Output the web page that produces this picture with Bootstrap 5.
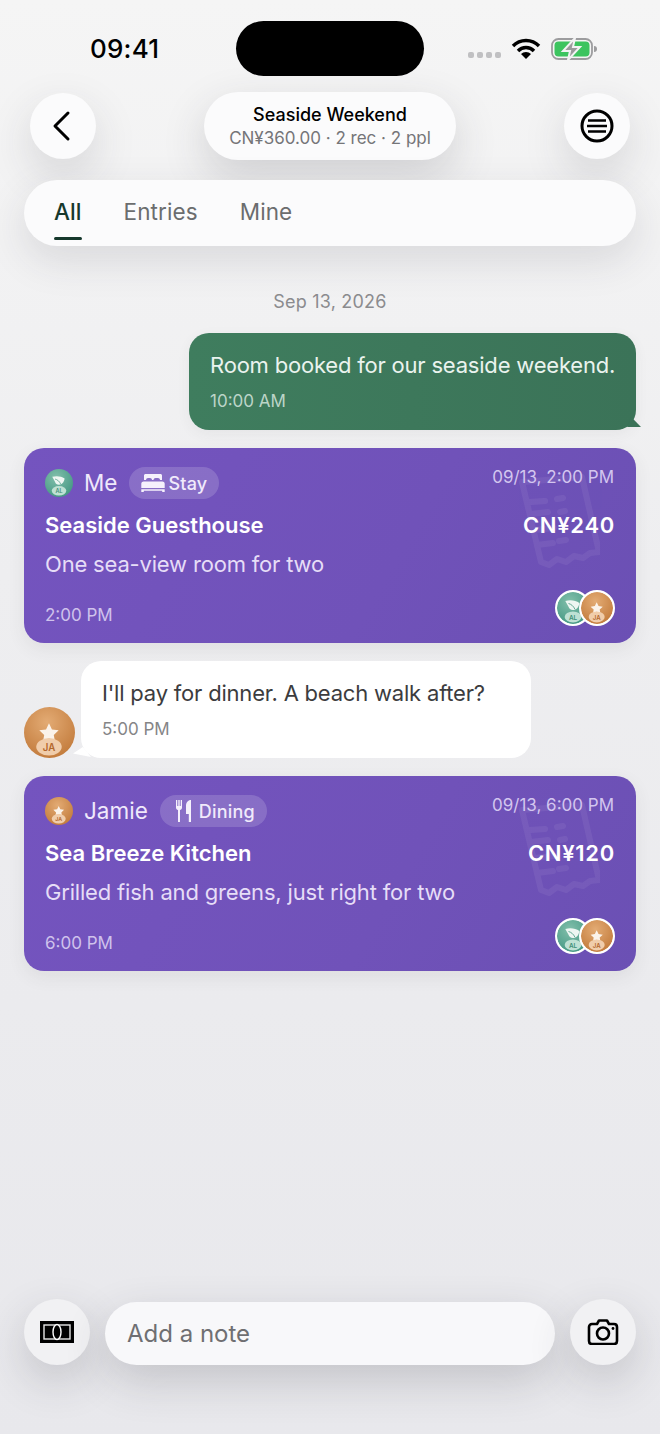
<!DOCTYPE html>
<html lang="en">
<head>
  <meta charset="UTF-8">
  <meta name="viewport" content="width=device-width, initial-scale=1">
  <title>Seaside Weekend</title>
  <link href="https://cdn.jsdelivr.net/npm/bootstrap@5.3.0/dist/css/bootstrap.min.css" rel="stylesheet">
  <style>
    html, body { height: 100%; }
    body {
      font-family: Inter, "Liberation Sans", sans-serif;
      background: linear-gradient(180deg, #f5f5f5 0%, #eeeef0 40%, #e8e8ec 100%);
      color: #3c3c3e;
      overflow: hidden;
    }
    .phone { width: 660px; height: 1434px; }

    /* status bar */
    .status-row { height: 92px; padding: 21px 62px 0 90px; }
    .clock { width: 146px; font-size: 26px; font-weight: 500; color: #000; line-height: 55px; letter-spacing: .2px; }
    .island { width: 188px; height: 55px; border-radius: 28px; background: #000; }
    .status-icons { margin-left: auto; height: 55px; gap: 10px; }
    .dots { gap: 3px; margin-top: 13px; }
    .dots i { width: 6px; height: 6px; border-radius: 2px; background: #c0c0c2; display: block; }

    /* header */
    .top-row { padding: 0 30px; height: 68px; }
    .round-btn {
      width: 66px; height: 66px; border-radius: 50%; background: #fbfbfc;
      box-shadow: 0 16px 44px rgba(50, 50, 60, .15);
    }
    .back-icon { margin-right: 5px; }
    .title-pill {
      width: 252px; height: 68px; border-radius: 34px; background: #fbfbfc;
      box-shadow: 0 16px 44px rgba(50, 50, 60, .18);
    }
    .title-main { font-size: 18px; font-weight: 500; color: #000; line-height: 24px; padding-top: 1px; }
    .title-sub { font-size: 17px; color: #757578; line-height: 23px; }

    /* tabs */
    .tab-bar {
      margin: 20px 24px 0; height: 66px; border-radius: 33px; background: #fbfbfc; padding: 0 30px;
      gap: 42px; box-shadow: 0 14px 40px rgba(50, 50, 60, .13);
    }
    .tab-item { font-size: 22.500px; color: #6b6d6e; line-height: 64px; height: 66px; position: relative; letter-spacing: .1px; }
    .tab-item.is-on { color: #16382c; font-weight: 500; }
    .tab-item.is-on::after {
      content: ""; position: absolute; left: 0; right: 0; bottom: 6px; height: 3px;
      border-radius: 2px; background: #16382c;
    }

    .date-line { font-size: 18px; color: #8b8b8e; line-height: 24px; margin-top: 44px; margin-bottom: 19px; text-align: center; letter-spacing: .2px; }

    /* chat bubbles */
    .feed { padding: 0 24px; gap: 18px; }
    .bubble { border-radius: 20px; position: relative; padding: 18px 21px 15px; }
    .bubble-text { font-size: 22px; line-height: 28px; letter-spacing: -.2px; white-space: nowrap; }
    .bubble-time { font-size: 17px; line-height: 24px; margin-top: 10px; }
    .bubble-me {
      align-self: flex-end; width: 447px; height: 97px; color: #eaf3ee;
      background: linear-gradient(90deg, #3f7d5e, #3b7358);
      box-shadow: 0 4px 14px rgba(60, 60, 70, .06);
    }
    .bubble-me .bubble-time { color: #bcd5c8; }
    .bubble-me::after {
      content: ""; position: absolute; right: -5px; bottom: 3px; width: 14px; height: 10px;
      background: #3b7358; clip-path: polygon(100% 100%, 30% 0, 0 100%);
    }
    .bubble-them { width: 450px; height: 97px; background: #fff; color: #3c3c3e; }
    .bubble-them .bubble-time { color: #858587; }
    .bubble-them::after {
      content: ""; position: absolute; left: -8px; bottom: 1px; width: 18px; height: 10px;
      background: #fff; clip-path: polygon(0 65%, 55% 0, 100% 100%);
    }
    .them-row { gap: 6px; }
    .them-avatar { width: 51px; height: 51px; flex: none; }

    /* expense cards */
    .entry {
      height: 195px; border-radius: 20px; padding: 19px 22px 0 21px; position: relative; overflow: hidden; color: #fff;
      background: linear-gradient(120deg, #7454bf 0%, #7052b9 60%, #6b50b4 100%);
      box-shadow: 0 6px 18px rgba(60, 60, 70, .08);
    }
    .entry-head { height: 32px; position: relative; }
    .entry-avatar { width: 28px; height: 28px; flex: none; }
    .entry-name { font-size: 22.500px; color: #efe8fb; margin-left: 11px; margin-right: 12px; }
    .kind-pill {
      height: 32px; border-radius: 16px; background: rgba(255, 255, 255, .16); padding: 0 12px 0 10px;
      font-size: 18px; font-weight: 500; color: #f0eafb; gap: 1px; letter-spacing: .2px;
    }
    .kind-glyph { width: 28px; }
    .entry-date { font-size: 17px; color: #d3c6ef; margin-left: auto; margin-top: -11px; }
    .entry-title { font-size: 22px; font-weight: 600; line-height: 28px; margin-top: 12px; position: relative; }
    .entry-price { letter-spacing: .7px; margin-right: -1px; }
    .entry-desc { font-size: 22px; color: #e6ddf7; line-height: 28px; margin-top: 11px; letter-spacing: -.18px; position: relative; }
    .entry-foot { margin-top: 12px; height: 36px; position: relative; }
    .entry-time { font-size: 17px; color: #cfc2ec; margin-top: 13px; }
    .avatar-stack { margin-right: -1px; }
    .stack-avatar { width: 36px; height: 36px; border-radius: 50%; border: 2px solid #fff; background: #fff; display: block; }
    .stack-avatar + .stack-avatar { margin-left: -12px; }
    .watermark { position: absolute; left: 486px; top: 22px; width: 90px; height: 100px; color: #fff; opacity: .06; }

    /* bottom bar */
    .bottom-row { padding: 0 24px; margin-bottom: 69px; gap: 15px; }
    .soft-btn {
      width: 66px; height: 66px; border-radius: 50%; background: #f1f1f3; flex: none;
      box-shadow: 0 16px 44px rgba(50, 50, 60, .2);
    }
    .note-box {
      height: 63px; border-radius: 32px; background: #f8f8fa; margin-top: 3px; padding: 0 22px;
      font-size: 24px; color: #6f6f72; box-shadow: 0 16px 44px rgba(50, 50, 60, .2);
    }
  </style>
</head>
<body>

<!-- shared avatars -->
<svg width="0" height="0" class="position-absolute">
  <defs>
    <radialGradient id="gradGreen" cx=".4" cy=".3" r=".8">
      <stop offset="0" stop-color="#82bfab"/><stop offset="1" stop-color="#3f9580"/>
    </radialGradient>
    <radialGradient id="gradOrange" cx=".45" cy=".3" r=".8">
      <stop offset="0" stop-color="#e3ab74"/><stop offset="1" stop-color="#bf7636"/>
    </radialGradient>
    <symbol id="avatarAl" viewBox="0 0 50 50">
      <circle cx="25" cy="25" r="25" fill="url(#gradGreen)"/>
      <path d="M13 14c8-2 16-1 22 3-1 7-5 11-10 11-4 0-6-2-7-5l-5-9z" fill="#eef6f2"/>
      <path d="M18 18c4 1 8 4 10 9" stroke="#5fa792" stroke-width="1.500" fill="none"/>
      <ellipse cx="25" cy="39" rx="13" ry="8.500" fill="#bfe1d4"/>
      <text x="25" y="43" text-anchor="middle" font-family="Inter, sans-serif" font-size="10" font-weight="600" fill="#3f8f78">AL</text>
    </symbol>
    <symbol id="avatarJa" viewBox="0 0 50 50">
      <circle cx="25" cy="25" r="25" fill="url(#gradOrange)"/>
      <path d="M24.500 16l2.900 6 6.600.9-4.800 4.600 1.200 6.500-5.900-3.200-5.900 3.200 1.200-6.500-4.800-4.600 6.600-.9z" fill="#fbf3ea"/>
      <ellipse cx="24.500" cy="39" rx="12.500" ry="8.500" fill="#f0cdab"/>
      <text x="24.500" y="43" text-anchor="middle" font-family="Inter, sans-serif" font-size="9.500" font-weight="600" fill="#b3672b">JA</text>
    </symbol>
    <symbol id="receiptMark" viewBox="0 0 90 100">
      <g fill="none" stroke="currentColor" stroke-width="6" stroke-linecap="round" stroke-linejoin="round">
        <path d="M12 12L72 7l17 75-9 1-7 5-9-2-8 6-9-3-8 6-8-3z"/>
        <path d="M20 32l15-1M47 29l6-1M21 44l17-2M50 42l5-1M24 60l20-2M27 75l16-2M49 71l7-1"/>
      </g>
    </symbol>
  </defs>
</svg>

<div class="phone d-flex flex-column">

  <!-- Status bar -->
  <div class="status-row d-flex align-items-start">
    <div class="clock">09:41</div>
    <div class="island"></div>
    <div class="status-icons d-flex align-items-center">
      <div class="dots d-flex"><i></i><i></i><i></i><i></i></div>
      <svg width="30" height="22" viewBox="0 0 30 22">
        <path d="M2 8a18 18 0 0 1 26 0" fill="none" stroke="#000" stroke-width="3.400"/>
        <path d="M7 13a11 11 0 0 1 16 0" fill="none" stroke="#000" stroke-width="3.400"/>
        <path d="M15 21l-5-5a7 7 0 0 1 10 0z" fill="#000"/>
      </svg>
      <svg width="47" height="22" viewBox="0 0 47 22">
        <rect x="1" y="1" width="40" height="20" rx="6.500" fill="none" stroke="#9c9c9e" stroke-width="1.800"/>
        <rect x="3.500" y="3.500" width="35" height="15" rx="4" fill="#3cc45f"/>
        <path d="M43 8c2 0 3 1 3 3s-1 3-3 3z" fill="#9c9c9e"/>
        <path d="M24 0L12 13h7l-2 9 12-13h-7z" fill="#9a9a9c" stroke="#f2f2f3" stroke-width="2"/>
      </svg>
    </div>
  </div>

  <!-- Header -->
  <div class="top-row d-flex justify-content-between align-items-center">
    <div class="round-btn d-flex align-items-center justify-content-center">
      <svg class="back-icon" width="20" height="32" viewBox="0 0 20 32"><path d="M17 3L4 16l13 13" fill="none" stroke="#000" stroke-width="3" stroke-linecap="round" stroke-linejoin="round"/></svg>
    </div>
    <div class="title-pill text-center d-flex flex-column justify-content-center">
      <div class="title-main">Seaside Weekend</div>
      <div class="title-sub">CN¥360.00 · 2 rec · 2 ppl</div>
    </div>
    <div class="round-btn d-flex align-items-center justify-content-center">
      <svg width="34" height="34" viewBox="0 0 34 34">
        <circle cx="17" cy="17" r="15" fill="none" stroke="#000" stroke-width="3"/>
        <path d="M8 11.500h18M7 17h20M8 22.500h18" stroke="#000" stroke-width="2.400"/>
      </svg>
    </div>
  </div>

  <!-- Tabs -->
  <div class="tab-bar d-flex">
    <div class="tab-item is-on">All</div>
    <div class="tab-item">Entries</div>
    <div class="tab-item">Mine</div>
  </div>

  <div class="date-line">Sep 13, 2026</div>

  <!-- Feed -->
  <div class="feed d-flex flex-column">
    <div class="bubble bubble-me">
      <div class="bubble-text">Room booked for our seaside weekend.</div>
      <div class="bubble-time">10:00 AM</div>
    </div>

    <div class="entry">
      <svg class="watermark"><use href="#receiptMark"/></svg>
      <div class="entry-head d-flex align-items-center">
        <svg class="entry-avatar"><use href="#avatarAl"/></svg>
        <span class="entry-name">Me</span>
        <span class="kind-pill d-flex align-items-center">
          <span class="kind-glyph d-flex justify-content-center">
            <svg width="24" height="18" viewBox="0 0 24 18" fill="#f5f1fc">
              <path d="M3 1.500C3 .7 3.700 0 4.500 0h15c.8 0 1.500.7 1.500 1.500V6h-2c0-1.200-1-2-2-2h-2.500c-1 0-2 .8-2 2h-1.500c0-1.200-1-2-2-2H7c-1 0-2 .8-2 2H3z"/>
              <path d="M2.500 7.500h19c1.200 0 2.200 1 2.200 2.200V14H.3V9.700c0-1.200 1-2.200 2.200-2.200zM.3 15.300h23.400V18h-2.500v-1.200H2.800V18H.3z"/>
            </svg>
          </span>
          Stay
        </span>
        <span class="entry-date">09/13, 2:00 PM</span>
      </div>
      <div class="d-flex justify-content-between entry-title"><span>Seaside Guesthouse</span><span class="entry-price">CN¥240</span></div>
      <div class="entry-desc">One sea-view room for two</div>
      <div class="entry-foot d-flex justify-content-between">
        <span class="entry-time">2:00 PM</span>
        <span class="avatar-stack d-flex">
          <svg class="stack-avatar"><use href="#avatarAl"/></svg>
          <svg class="stack-avatar"><use href="#avatarJa"/></svg>
        </span>
      </div>
    </div>

    <div class="them-row d-flex align-items-end">
      <svg class="them-avatar"><use href="#avatarJa"/></svg>
      <div class="bubble bubble-them">
        <div class="bubble-text">I'll pay for dinner. A beach walk after?</div>
        <div class="bubble-time">5:00 PM</div>
      </div>
    </div>

    <div class="entry">
      <svg class="watermark"><use href="#receiptMark"/></svg>
      <div class="entry-head d-flex align-items-center">
        <svg class="entry-avatar"><use href="#avatarJa"/></svg>
        <span class="entry-name">Jamie</span>
        <span class="kind-pill d-flex align-items-center">
          <span class="kind-glyph d-flex justify-content-center">
            <svg width="16" height="22" viewBox="0 0 16 22" fill="#f5f1fc">
              <path d="M0 0h1.300v6h1V0h1.400v6h1V0H6v7.500c0 1.300-.9 2.300-2 2.600V22H2V10.100C.9 9.800 0 8.800 0 7.500z"/>
              <path d="M15 0v22h-2.200v-8H10V6c0-3.500 2-6 5-6z"/>
            </svg>
          </span>
          Dining
        </span>
        <span class="entry-date">09/13, 6:00 PM</span>
      </div>
      <div class="d-flex justify-content-between entry-title"><span>Sea Breeze Kitchen</span><span class="entry-price">CN¥120</span></div>
      <div class="entry-desc">Grilled fish and greens, just right for two</div>
      <div class="entry-foot d-flex justify-content-between">
        <span class="entry-time">6:00 PM</span>
        <span class="avatar-stack d-flex">
          <svg class="stack-avatar"><use href="#avatarAl"/></svg>
          <svg class="stack-avatar"><use href="#avatarJa"/></svg>
        </span>
      </div>
    </div>
  </div>

  <!-- Bottom bar -->
  <div class="bottom-row d-flex align-items-start mt-auto">
    <div class="soft-btn d-flex align-items-center justify-content-center">
      <svg width="34" height="22" viewBox="0 0 34 22">
        <rect width="34" height="22" fill="#000"/>
        <rect x="4" y="4" width="26" height="14" fill="none" stroke="#e6e6e6" stroke-width="1.400"/>
        <ellipse cx="17" cy="11" rx="4" ry="7.500" fill="#000" stroke="#fff" stroke-width="1.400"/>
      </svg>
    </div>
    <div class="note-box flex-grow-1 d-flex align-items-center">Add a note</div>
    <div class="soft-btn d-flex align-items-center justify-content-center">
      <svg width="32" height="26" viewBox="0 0 32 26">
        <path d="M5 5h5l2-3.500h8L22 5h5c1.700 0 3 1.300 3 3v14c0 1.700-1.300 3-3 3H5c-1.700 0-3-1.300-3-3V8c0-1.700 1.300-3 3-3z" fill="none" stroke="#000" stroke-width="2.600" stroke-linejoin="round"/>
        <circle cx="16" cy="14.500" r="6" fill="none" stroke="#000" stroke-width="2.600"/>
        <circle cx="26" cy="9.500" r="1.400" fill="#000"/>
      </svg>
    </div>
  </div>

</div>

<script src="https://cdn.jsdelivr.net/npm/bootstrap@5.3.0/dist/js/bootstrap.bundle.min.js"></script>
</body>
</html>
